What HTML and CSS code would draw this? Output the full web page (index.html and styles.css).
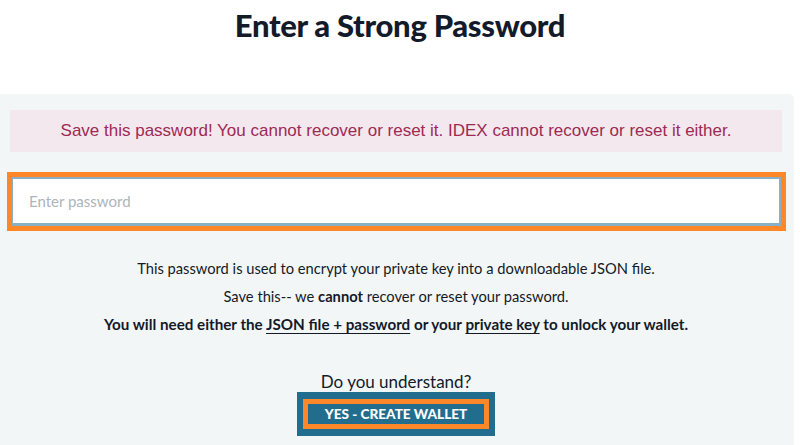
FILE: index.html
```html
<!DOCTYPE html>
<html>
<head>
<meta charset="utf-8">
<link rel="stylesheet" href="styles.css">
</head>
<body>
<h1 class="title">Enter a Strong Password</h1>
<section class="panel">
  <div class="alert">Save this password! You cannot recover or reset it. IDEX cannot recover or reset it either.</div>
  <input class="pw-input" type="password" placeholder="Enter password">
  <div class="info">
    <p>This password is used to encrypt your private key into a downloadable JSON file.</p>
    <p>Save this-- we <b>cannot</b> recover or reset your password.</p>
    <p class="strong">You will need either the <u>JSON file + password</u> or your <u>private key</u> to unlock your wallet.</p>
  </div>
  <div class="confirm">
    <div class="question">Do you understand?</div>
    <div class="btn-wrap"><span class="btn">YES - CREATE WALLET</span></div>
  </div>
</section>
</body>
</html>
```
FILE: styles.css
```css
html, body {
  margin: 0;
  background: #ffffff;
  font-family: "Lato", "Noto Sans", sans-serif;
  color: #141a28;
}
.title {
  margin: 0;
  padding-top: 6px;
  height: 94px;
  box-sizing: border-box;
  text-align: center;
  font-size: 31px;
  font-weight: 900;
  line-height: 38px;
  letter-spacing: -0.3px;
  color: #131a2a;
}
.panel {
  background: #f3f6f7;
  margin-right: 6px;
  border-radius: 0 5px 0 0;
  padding: 16px 12px 20px 10px;
  height: 351px;
  box-sizing: border-box;
  overflow: hidden;
}
.alert {
  background: #f3e8ee;
  color: #9e2a52;
  font-family: "Liberation Sans", Arial, sans-serif;
  font-size: 17px;
  height: 42px;
  display: flex;
  align-items: center;
  justify-content: center;
}
.pw-input {
  display: block;
  box-sizing: border-box;
  width: calc(100% - 3px);
  margin: 25px 0 0 2px;
  height: 49px;
  border: 2px solid #8ab0c5;
  border-left-width: 1px;
  border-bottom-width: 3px;
  background: #ffffff;
  outline: 5px solid #fe872a;
  padding: 0 16px;
  font-family: "Lato", sans-serif;
  font-size: 15px;
}
.pw-input::placeholder {
  color: #aeb4ba;
}
.info {
  margin-top: 28px;
  text-align: center;
  font-size: 14.7px;
  line-height: 28px;
}
.info p {
  margin: 0;
}
.info .strong {
  font-weight: 700;
  font-size: 15.2px;
}
.info u {
  text-decoration-thickness: 1px;
  text-underline-offset: 3px;
}
.confirm {
  margin-top: 34px;
  display: flex;
  flex-direction: column;
  align-items: center;
}
.question {
  font-size: 17px;
  line-height: 20px;
}
.btn-wrap {
  margin-top: 0;
  background: #226d8d;
  padding: 7px 6px;
}
.btn {
  display: block;
  border: 5px solid #fe872a;
  width: 176px;
  line-height: 20px;
  color: #ffffff;
  font-weight: 900;
  font-size: 13.6px;
  white-space: nowrap;
  text-align: center;
}
```
